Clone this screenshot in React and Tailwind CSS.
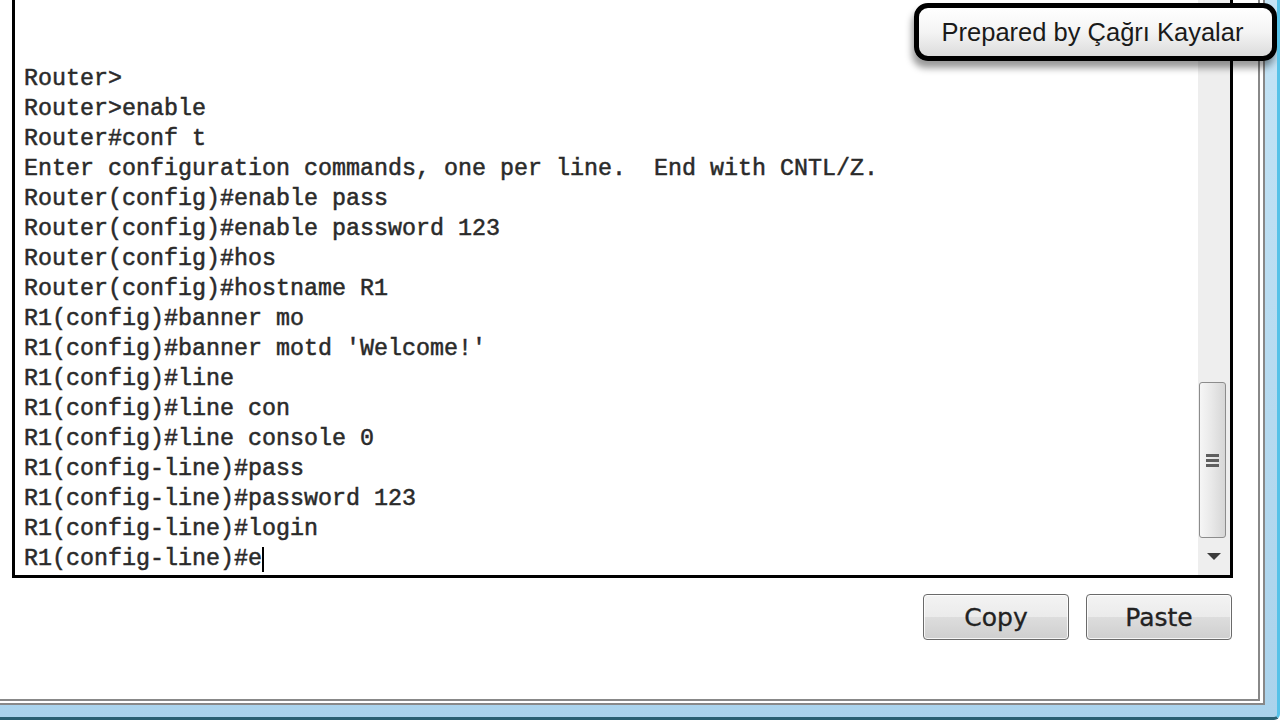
const LINES = [
  "Router>",
  "Router>enable",
  "Router#conf t",
  "Enter configuration commands, one per line.  End with CNTL/Z.",
  "Router(config)#enable pass",
  "Router(config)#enable password 123",
  "Router(config)#hos",
  "Router(config)#hostname R1",
  "R1(config)#banner mo",
  "R1(config)#banner motd 'Welcome!'",
  "R1(config)#line",
  "R1(config)#line con",
  "R1(config)#line console 0",
  "R1(config-line)#pass",
  "R1(config-line)#password 123",
  "R1(config-line)#login",
];

function Scrollbar() {
  return (
    <div className="w-[32px] bg-[#eeeeee] flex flex-col">
      <div className="flex-1" />
      <div className="ml-[1px] w-[27px] h-[156px] rounded-[3px] border border-[#8c8c8c] bg-[linear-gradient(to_right,#f6f6f6,#e9e9e9_45%,#d6d6d6)] flex flex-col items-center justify-center gap-[2px]">
        <div className="w-[13px] h-[3px] bg-[#5e5e5e]" />
        <div className="w-[13px] h-[3px] bg-[#5e5e5e]" />
        <div className="w-[13px] h-[3px] bg-[#5e5e5e]" />
      </div>
      <div className="h-[37px] flex items-center justify-center">
        <svg width="14" height="7" viewBox="0 0 14 7">
          <path d="M0 0 L14 0 L7 7 Z" fill="#3c3c3c" />
        </svg>
      </div>
    </div>
  );
}

function Btn({ children }) {
  return (
    <div className="w-[146px] h-[46px] rounded-[4px] border border-[#6a6a6a] bg-[linear-gradient(#f3f3f3_0%,#ebebeb_50%,#dddddd_50%,#cfcfcf_100%)] shadow-[inset_0_0_0_1px_rgba(255,255,255,0.8)] flex items-center justify-center">
      <span className="text-[25px] text-[#222222] font-['DejaVu_Sans',sans-serif] leading-none [-webkit-text-stroke:0.3px_#222222]">
        {children}
      </span>
    </div>
  );
}

export default function App() {
  return (
    <div className="w-[1280px] h-[720px] overflow-hidden relative bg-[linear-gradient(#c4e4f6,#aad3ec)] border-r-[3px] border-r-[#56c2e8] border-b-[3px] border-b-[#2a6072] rounded-br-[6px]">
      <div className="w-[1265px] h-[705px] bg-white border-r-2 border-b-2 border-[#888888]">
        <div className="w-[1260px] h-[701px] border-r-2 border-b-2 border-[#888888] flex flex-col pl-[12px]">
          <div className="-mt-[20px] h-[598px] w-[1221px] border-[3px] border-black bg-white flex">
            <div className="flex-1 flex flex-col justify-end pl-[9px] pb-[1px] font-['Liberation_Mono',monospace] text-[23.33px] leading-[30px] text-[#2a2a2a] [-webkit-text-stroke:0.5px_#2a2a2a] whitespace-pre">
              {LINES.map((l, i) => (
                <div key={i}>{l}</div>
              ))}
              <div className="flex items-center">
                <span>R1(config-line)#e</span>
                <span className="inline-block w-[2px] h-[25px] bg-black" />
              </div>
            </div>
            <Scrollbar />
          </div>
          <div className="mt-[16px] w-[1220px] flex justify-end gap-[17px]">
            <Btn>Copy</Btn>
            <Btn>Paste</Btn>
          </div>
        </div>
      </div>
      <div className="absolute left-[914px] top-[3px] w-[363px] h-[58px] rounded-[14px] border-[5px] border-black bg-[linear-gradient(#ffffff,#f4f4f4_50%,#dcdcdc)] shadow-[-2px_7px_7px_rgba(0,0,0,0.4)] flex items-center justify-center pr-[6px] pt-[2px]">
        <span className="font-['Liberation_Sans',Arial,sans-serif] text-[25.5px] text-[#1a1a1a] leading-none">
          Prepared by Çağrı Kayalar
        </span>
      </div>
    </div>
  );
}
